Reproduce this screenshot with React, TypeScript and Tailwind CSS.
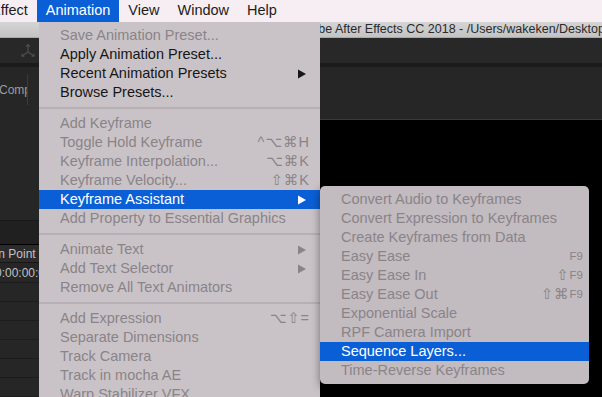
import React from 'react';

type Item =
  | { sep: true }
  | { label: string; disabled?: boolean; shortcut?: string; small?: boolean; arrow?: boolean; active?: boolean };

const mainItems: Item[] = [
  { label: 'Save Animation Preset...', disabled: true },
  { label: 'Apply Animation Preset...' },
  { label: 'Recent Animation Presets', arrow: true },
  { label: 'Browse Presets...' },
  { sep: true },
  { label: 'Add Keyframe', disabled: true },
  { label: 'Toggle Hold Keyframe', disabled: true, shortcut: '^⌥⌘H' },
  { label: 'Keyframe Interpolation...', disabled: true, shortcut: '⌥⌘K' },
  { label: 'Keyframe Velocity...', disabled: true, shortcut: '⇧⌘K' },
  { label: 'Keyframe Assistant', arrow: true, active: true },
  { label: 'Add Property to Essential Graphics', disabled: true },
  { sep: true },
  { label: 'Animate Text', disabled: true, arrow: true },
  { label: 'Add Text Selector', disabled: true, arrow: true },
  { label: 'Remove All Text Animators', disabled: true },
  { sep: true },
  { label: 'Add Expression', disabled: true, shortcut: '⌥⇧=' },
  { label: 'Separate Dimensions', disabled: true },
  { label: 'Track Camera', disabled: true },
  { label: 'Track in mocha AE', disabled: true },
  { label: 'Warp Stabilizer VFX', disabled: true },
];

const subItems: Item[] = [
  { label: 'Convert Audio to Keyframes', disabled: true },
  { label: 'Convert Expression to Keyframes', disabled: true },
  { label: 'Create Keyframes from Data', disabled: true },
  { label: 'Easy Ease', disabled: true, shortcut: 'F9', small: true },
  { label: 'Easy Ease In', disabled: true, shortcut: '⇧F9', small: true },
  { label: 'Easy Ease Out', disabled: true, shortcut: '⇧⌘F9', small: true },
  { label: 'Exponential Scale', disabled: true },
  { label: 'RPF Camera Import', disabled: true },
  { label: 'Sequence Layers...', active: true },
  { label: 'Time-Reverse Keyframes', disabled: true },
];

const Arrow = ({ color }: { color: string }) => (
  <svg width="8" height="10" viewBox="0 0 8 10" className="mr-[4px]">
    <polygon points="0,0.5 8,5 0,9.5" fill={color} />
  </svg>
);

const Shortcut = ({ text, small }: { text: string; small?: boolean }) => {
  if (!small) return <span className="tracking-[1px]">{text}</span>;
  const m = text.match(/^(.*?)(F9)$/);
  return (
    <span className="flex items-center">
      <span className="tracking-[1px]">{m ? m[1] : ''}</span>
      <span className="text-[11.5px]">F9</span>
    </span>
  );
};

const MenuRows = ({ items, pr }: { items: Item[]; pr: string }) => (
  <>
    {items.map((it, i) => {
      if ('sep' in it) return <div key={i} className="h-[2px] my-[5px] bg-[#b6b0b4]" />;
      const color = it.active ? 'text-white bg-[#0b5fd6]' : it.disabled ? 'text-[#8a8488]' : 'text-[#161616]';
      const arrowColor = it.active ? '#ffffff' : it.disabled ? '#8a8488' : '#161616';
      return (
        <div key={i} className={`flex items-center justify-between h-[19px] pl-[21px] ${pr} ${color}`}>
          <span className="whitespace-nowrap">{it.label}</span>
          {it.shortcut && <Shortcut text={it.shortcut} small={it.small} />}
          {it.arrow && <Arrow color={arrowColor} />}
        </div>
      );
    })}
  </>
);

const AxisIcon = () => (
  <svg width="16" height="16" viewBox="0 0 16 16" fill="none" stroke="#4d4d4d" strokeWidth="1.2">
    <path d="M8 9V1.5M6 3.5L8 1.5L10 3.5" />
    <path d="M8 9L2 13M2.3 10.6L2 13L4.4 13.3" />
    <path d="M8 9L14 13M13.7 10.6L14 13L11.6 13.3" />
  </svg>
);

export default function App() {
  return (
    <div className="relative w-[602px] h-[397px] overflow-hidden bg-black text-[14.5px] font-['Liberation_Sans','DejaVu_Sans',sans-serif]">
      <div className="flex flex-col h-full">
        {/* menu bar */}
        <div className="flex items-center h-[22px] bg-[#f6eef3] text-[#1c1c1c]">
          <div className="h-full flex items-center pr-[9px] -ml-[9px]">Effect</div>
          <div className="h-full flex items-center px-[9px] bg-[#0b5fd6] text-white">Animation</div>
          <div className="h-full flex items-center px-[9px]">View</div>
          <div className="h-full flex items-center px-[9px]">Window</div>
          <div className="h-full flex items-center px-[9px]">Help</div>
        </div>

        {/* window title bar */}
        <div className="h-[16px] bg-gradient-to-b from-[#d5d5d5] to-[#c3c3c3] border-b border-[#a9a9a9] flex items-center pl-[296px] overflow-hidden">
          <span className="whitespace-nowrap text-[12.5px] leading-none text-[#2a2a2a]">
            Adobe After Effects CC 2018 - /Users/wakeken/Desktop/AE
          </span>
        </div>

        <div className="flex flex-1 min-h-0">
          {/* left: project + timeline */}
          <div className="w-[300px] flex flex-col bg-[#262626]">
            <div className="h-[25px] bg-[#282828] flex items-center pl-[20px]">
              <AxisIcon />
            </div>
            <div className="h-[4px] bg-[#1b1b1b]" />
            <div className="h-[153px] pt-[7px]">
              <div className="flex h-[31px] items-center">
                <div className="w-[28px] overflow-hidden border-r border-[#3a3a3a] h-full flex items-center">
                  <span className="whitespace-nowrap text-[12px] text-[#9c9c9c] -ml-[1px]">Composition</span>
                </div>
              </div>
            </div>
            <div className="h-[25px] bg-[#202020] border-t border-[#191919] border-b border-b-black" />
            <div className="h-[18px] bg-[#2b2b2b] border-b border-[#161616] flex items-center">
              <span className="whitespace-nowrap text-[12px] text-[#c2c2c2] -ml-[5px]">In Point</span>
            </div>
            <div className="h-[20px] border-b border-[#1d1d1d] flex items-center">
              <span className="whitespace-nowrap text-[12px] text-[#c2c2c2] -ml-[5px]">0:00:00:00</span>
            </div>
            {[0, 1, 2, 3, 4, 5].map((r) => (
              <div key={r} className="h-[19px] border-b border-[#1d1d1d]" />
            ))}
          </div>

          {/* right: comp viewer */}
          <div className="flex-1 flex flex-col">
            <div className="h-[25px] bg-[#282828]" />
            <div className="h-[4px] bg-[#1b1b1b]" />
            <div className="h-[53px] bg-[#262626] border-b border-[#3a3a3a]" />
            <div className="flex-1 bg-black" />
          </div>
        </div>
      </div>

      {/* Animation menu */}
      <div className="absolute left-[39px] top-[22px] w-[281px] h-[400px] pt-[4px] bg-[#c9c3c7]">
        <MenuRows items={mainItems} pr="pr-[10px]" />
      </div>

      {/* Keyframe Assistant submenu */}
      <div className="absolute left-[320px] top-[186px] w-[269px] py-[4px] rounded-[5px] bg-[#c2bbc0] shadow-[0_3px_8px_rgba(0,0,0,0.45)] overflow-hidden">
        <MenuRows items={subItems} pr="pr-[6px]" />
      </div>
    </div>
  );
}
